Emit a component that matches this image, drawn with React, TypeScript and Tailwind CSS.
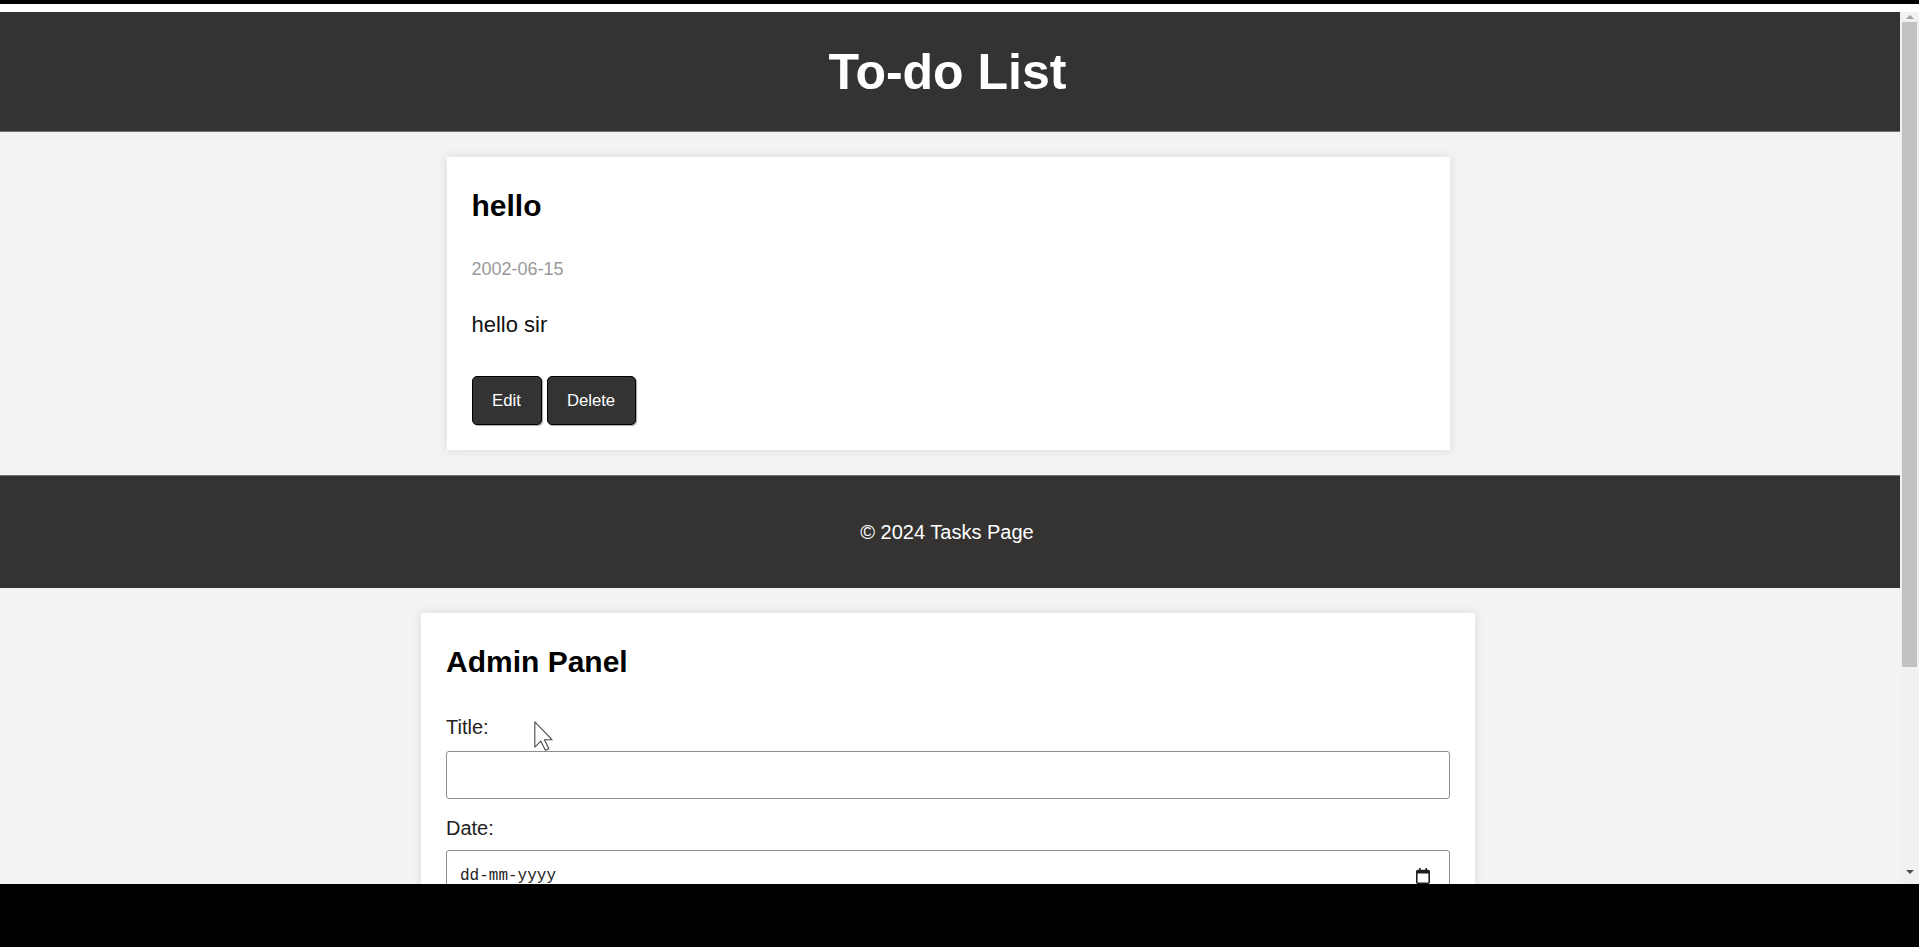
import React from 'react';

function CalendarGlyph() {
  return (
    <svg width="14" height="16" viewBox="0 0 14 16" className="shrink-0">
      <rect x="3" y="0" width="1.6" height="3" fill="#1f1f1f" />
      <rect x="9.4" y="0" width="1.6" height="3" fill="#1f1f1f" />
      <rect x="0.8" y="2.5" width="12.4" height="12.7" rx="1" fill="none" stroke="#1f1f1f" strokeWidth="1.6" />
      <rect x="0.8" y="2.5" width="12.4" height="3" fill="#1f1f1f" />
    </svg>
  );
}

function Cursor() {
  return (
    <svg width="19" height="30" viewBox="0 0 12 19" className="absolute left-[534px] top-[709px]">
      <polygon
        points="0.5,0.5 0.5,16.5 4.3,12.8 7.2,18.5 9.4,17.5 6.6,11.9 11.5,11.9"
        fill="#ffffff"
        stroke="#4a4a4a"
        strokeWidth="0.7"
        strokeLinejoin="round"
      />
    </svg>
  );
}

export default function App() {
  return (
    <div className="w-full h-screen bg-black overflow-hidden flex flex-col font-['Liberation_Sans',Arial,sans-serif]">
      {/* window chrome strip */}
      <div className="h-[4px] bg-black shrink-0" />
      <div className="h-[8px] bg-white shrink-0" />

      {/* viewport */}
      <div className="h-[872px] shrink-0 flex">
        <div className="flex-1 relative overflow-hidden bg-[#f2f3f3]">
          {/* Header */}
          <header className="h-[120px] bg-[#353331] border-b border-[#727270] flex items-center justify-center pr-[5px] pt-[1px]">
            <h1 className="text-[50px] font-bold text-white leading-none">To-do List</h1>
          </header>

          {/* Task card */}
          <div className="flex justify-center pr-[4px] pt-[25px]">
            <div className="w-[1003px] bg-white shadow-[0_0_10px_rgba(0,0,0,0.1)] px-[25px] pt-[25px] pb-[25px]">
              <h2 className="mt-[7px] text-[30px] leading-[34px] font-bold text-black">hello</h2>
              <p className="mt-[36px] text-[18px] leading-[21px] text-[#999999]">2002-06-15</p>
              <p className="mt-[32px] text-[22px] leading-[25px] text-[#111111]">hello sir</p>
              <div className="mt-[39px] flex gap-[5px]">
                <button className="w-[70px] h-[49px] bg-[#333333] border border-black rounded-[5px] text-white text-[16.7px] shadow-[1px_1px_1px_rgba(0,0,0,0.35)]">
                  Edit
                </button>
                <button className="w-[89px] h-[49px] bg-[#333333] border border-black rounded-[5px] text-white text-[16.7px] shadow-[1px_1px_1px_rgba(0,0,0,0.35)]">
                  Delete
                </button>
              </div>
            </div>
          </div>

          {/* Footer */}
          <footer className="mt-[25px] h-[113px] bg-[#353331] border-t border-[#727270] flex items-center justify-center pr-[6px]">
            <p className="text-[20px] text-white">© 2024 Tasks Page</p>
          </footer>

          {/* Admin panel */}
          <div className="flex justify-center pr-[4px] pt-[25px]">
            <div className="w-[1054px] bg-white shadow-[0_0_10px_rgba(0,0,0,0.1)] px-[25px] pt-[25px] pb-[25px]">
              <h2 className="mt-[7px] text-[30px] leading-[34px] font-bold text-black">Admin Panel</h2>
              <label className="block mt-[37px] text-[20px] leading-[23px] text-[#222222]">Title:</label>
              <input
                type="text"
                className="block mt-[12px] w-full h-[48px] border border-[#8f8f8f] rounded-[3px] px-[12px] bg-white outline-none"
              />
              <label className="block mt-[18px] text-[20px] leading-[23px] text-[#222222]">Date:</label>
              <div className="mt-[10px] w-full h-[48px] border border-[#8f8f8f] rounded-[3px] pl-[13px] pr-[19px] pt-[4px] flex items-center justify-between">
                <span className="font-['Liberation_Mono',monospace] text-[16px] text-[#222222]">dd-mm-yyyy</span>
                <CalendarGlyph />
              </div>
              <label className="block mt-[18px] text-[20px] leading-[23px] text-[#222222]">Description:</label>
              <div className="mt-[10px] w-full h-[100px] border border-[#8f8f8f] rounded-[3px]" />
              <button className="mt-[18px] px-5 h-[49px] bg-[#333333] border border-black rounded-[5px] text-white text-[16.7px]">
                Add Task
              </button>
            </div>
          </div>

          <Cursor />
        </div>

        {/* scrollbar */}
        <div className="w-[19px] bg-[#f1f1f1] flex flex-col items-center">
          <div className="h-[10px] w-full flex items-center justify-center">
            <div className="w-0 h-0 border-l-[4px] border-r-[4px] border-b-[4px] border-l-transparent border-r-transparent border-b-[#a3a3a3]" />
          </div>
          <div className="w-[15px] h-[645px] bg-[#c1c1c1]" />
          <div className="flex-1" />
          <div className="h-[16px] w-full flex items-start justify-center pt-[2px]">
            <div className="w-0 h-0 border-l-[4px] border-r-[4px] border-t-[4px] border-l-transparent border-r-transparent border-t-[#505050]" />
          </div>
        </div>
      </div>

      <div className="flex-1 bg-black" />
    </div>
  );
}
